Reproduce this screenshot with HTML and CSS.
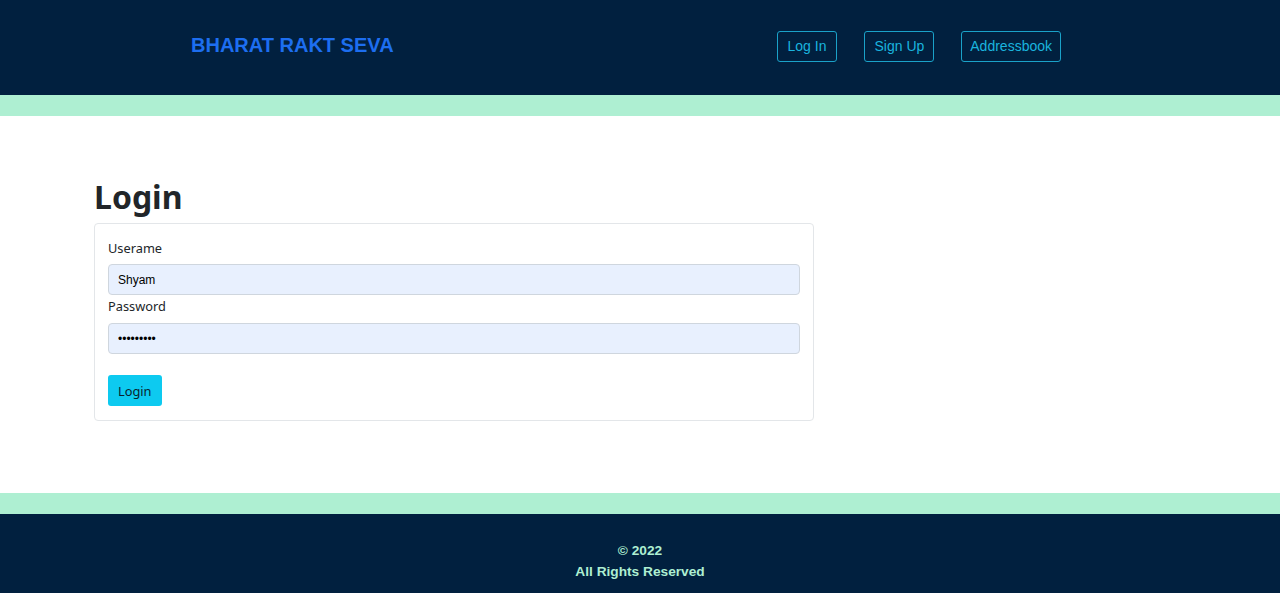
FILE: index.html
```html
<!DOCTYPE html>
<html lang="en">
<head>
<meta charset="utf-8">
<title>Bharat Rakt Seva - Login</title>
<link rel="stylesheet" href="styles.css">
</head>
<body>
<header class="site-header">
  <div class="brand">BHARAT RAKT SEVA</div>
  <nav class="nav">
    <a class="nav-btn" href="#">Log In</a>
    <a class="nav-btn" href="#">Sign Up</a>
    <a class="nav-btn" href="#">Addressbook</a>
  </nav>
</header>
<div class="stripe"></div>
<main class="main">
  <h1 class="title">Login</h1>
  <form class="card">
    <label class="label" for="u">Userame</label>
    <input class="input" id="u" type="text" value="Shyam">
    <label class="label" for="p">Password</label>
    <input class="input" id="p" type="password" value="123456789">
    <button class="btn" type="button">Login</button>
  </form>
</main>
<div class="stripe"></div>
<footer class="footer">
  <div>© 2022</div>
  <div>All Rights Reserved</div>
</footer>
</body>
</html>
```
FILE: styles.css
```css
* { box-sizing: border-box; }
html, body { margin: 0; padding: 0; }
body { font-family: "Noto Sans", "Liberation Sans", sans-serif; color: #212529; background: #fff; }

.site-header {
  height: 95px;
  background: #01203f;
  display: flex;
  align-items: center;
  justify-content: space-between;
  padding: 0 219px 2px 191px;
}
.brand {
  font-family: "Liberation Sans", Arial, sans-serif;
  font-weight: bold;
  font-size: 20px;
  color: #1d6ef0;
  margin-top: -3px;
}
.nav { display: flex; gap: 27px; }
.nav-btn {
  font-family: "Liberation Sans", Arial, sans-serif;
  font-size: 14px;
  line-height: 17px;
  color: #1ab4de;
  text-decoration: none;
  border: 1px solid #1aa2c9;
  border-radius: 3px;
  padding: 6px 9px;
}
.nav-btn:nth-child(1) { padding: 6px 10px; }
.nav-btn:nth-child(3) { padding: 6px 8px; }

.stripe { height: 21px; background: #aeefd2; }

.main { padding: 62px 0 72px 94px; }
.title {
  margin: 0 0 7px;
  font-size: 32px;
  line-height: 38px;
  font-weight: 700;
  color: #212529;
}
.card {
  width: 720px;
  border: 1px solid #e3e6e9;
  border-radius: 4px;
  padding: 15px 13px 14px 13px;
  display: flex;
  flex-direction: column;
  align-items: flex-start;
}
.label {
  font-size: 12.8px;
  line-height: 19px;
  margin-bottom: 6px;
}
.label + .input + .label { margin-top: 2px; margin-bottom: 7px; }
.input {
  width: 100%;
  height: 31px;
  border: 1px solid #cfd6de;
  border-radius: 4px;
  background: #e8f0fe;
  font-family: "Liberation Sans", Arial, sans-serif;
  font-size: 12px;
  color: #000;
  padding: 0 9px;
  margin: 0;
}
.btn {
  margin-top: 21px;
  height: 31px;
  padding: 0 10px;
  border: none;
  border-radius: 3px;
  background: #0dcaf0;
  color: #0a1f2e;
  font-family: "Noto Sans", "Liberation Sans", sans-serif;
  font-size: 12.8px;
}

.footer {
  background: #01203f;
  height: 79px;
  padding-top: 26px;
  text-align: center;
  font-family: "Liberation Sans", Arial, sans-serif;
  font-weight: bold;
  font-size: 13.7px;
  line-height: 21px;
  color: #aeefd2;
}
```
